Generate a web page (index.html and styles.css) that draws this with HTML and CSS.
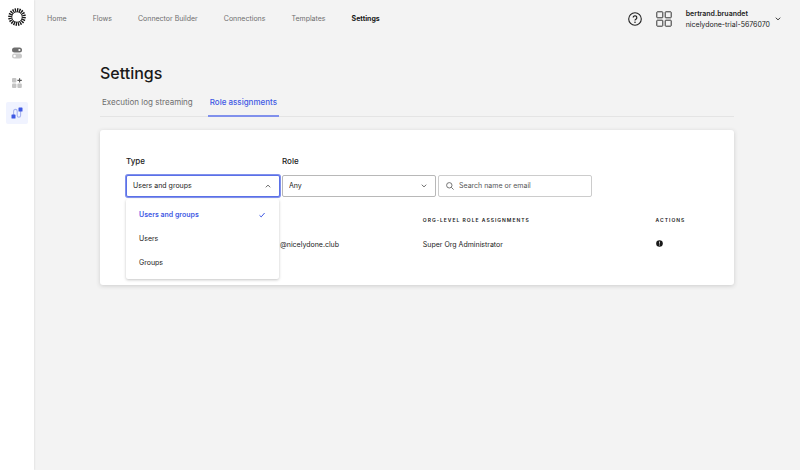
FILE: index.html
```html
<!DOCTYPE html>
<html lang="en">
<head>
    <meta charset="UTF-8">
    <meta name="viewport" content="width=device-width, initial-scale=1.0">
    <title>Settings</title>
    <link rel="stylesheet" href="styles.css">
</head>
<body>
    <aside class="sidebar">
        <a class="logo" href="#" aria-label="Dashboard">
            <svg width="18" height="18" viewBox="0 0 18 18">
                <circle cx="9" cy="9" r="5.2" fill="none" stroke="#191919" stroke-width="0.8"/>
                <circle cx="9" cy="9" r="7" fill="none" stroke="#191919" stroke-width="3.6" pathLength="60" stroke-dasharray="1.8 1.2"/>
            </svg>
        </a>
        <nav class="apps">
            <a href="#" aria-label="Switches">
                <svg width="10" height="12" viewBox="0 0 10 12">
                    <rect x="0" y="0.5" width="10" height="5" rx="2.5" fill="#6e6e6e"/>
                    <circle cx="7.4" cy="3" r="1.1" fill="#fff"/>
                    <rect x="0" y="6.5" width="10" height="5" rx="2.5" fill="#c9c9c9"/>
                    <circle cx="2.6" cy="9" r="1.3" fill="#fff"/>
                </svg>
            </a>
            <a href="#" aria-label="Add app">
                <svg width="10" height="10" viewBox="0 0 10 10">
                    <g fill="#c4c4c4">
                        <rect x="0" y="0" width="4.4" height="4.4" rx="1"/>
                        <rect x="0" y="5.6" width="4.4" height="4.4" rx="1"/>
                        <rect x="5.4" y="5.6" width="4.4" height="4.4" rx="1"/>
                    </g>
                    <path d="M7.6 0.2v4.4M5.4 2.4h4.4" stroke="#555" stroke-width="1.1"/>
                </svg>
            </a>
            <a class="active" href="#" aria-label="Workflows">
                <svg width="12" height="12" viewBox="0 0 12 12">
                    <path d="M2.6 8V4.2a1.8 1.8 0 0 1 3.6 0v4.3a1.7 1.7 0 0 0 3.4 0V4" fill="none" stroke="#a9b4ee" stroke-width="1.1"/>
                    <rect x="0.5" y="7.5" width="4" height="4" rx="0.6" fill="#3f59e4"/>
                    <rect x="7.5" y="0.5" width="4" height="4" rx="0.6" fill="#3f59e4"/>
                </svg>
            </a>
        </nav>
    </aside>
    <div class="page">
        <header class="topbar">
            <nav class="main-nav">
                <a href="#">Home</a>
                <a href="#">Flows</a>
                <a href="#">Connector Builder</a>
                <a href="#">Connections</a>
                <a href="#">Templates</a>
                <a class="current" href="#">Settings</a>
            </nav>
            <div class="tools">
                <button class="icon-button" type="button" aria-label="Help">
                    <svg width="14" height="14" viewBox="0 0 14 14" fill="none" stroke="#222">
                        <circle cx="7" cy="7" r="6.3" stroke-width="1.1"/>
                        <path d="M5.2 5.6a1.8 1.8 0 1 1 2.7 1.6c-.6.35-.9.6-.9 1.3" stroke-width="1.2"/>
                        <circle cx="7" cy="10.2" r="0.8" fill="#222" stroke="none"/>
                    </svg>
                </button>
                <button class="icon-button" type="button" aria-label="Apps">
                    <svg width="16" height="16" viewBox="0 0 16 16" fill="none" stroke="#333">
                        <rect x="0.8" y="0.8" width="6" height="6" rx="0.6"/>
                        <rect x="9.2" y="0.8" width="6" height="6" rx="0.6"/>
                        <rect x="0.8" y="9.2" width="6" height="6" rx="0.6"/>
                        <rect x="9.2" y="9.2" width="6" height="6" rx="0.6"/>
                    </svg>
                </button>
                <button class="account" type="button">
                    <span class="account-text">
                        <strong>bertrand.bruandet</strong>
                        <span>nicelydone-trial-5676070</span>
                    </span>
                    <svg width="6" height="4" viewBox="0 0 6 4" fill="none" stroke="#333"><path d="M0.8 0.7L3 2.9L5.2 0.7"/></svg>
                </button>
            </div>
        </header>
        <main class="content">
            <h1>Settings</h1>
            <nav class="tabs">
                <a href="#">Execution log streaming</a>
                <a class="selected" href="#">Role assignments</a>
            </nav>
            <section class="card">
                <form class="filters">
                    <div class="field">
                        <label for="type">Type</label>
                        <div class="control open">
                            <select id="type">
                                <option>Users and groups</option>
                                <option>Users</option>
                                <option>Groups</option>
                            </select>
                            <svg class="chevron" width="6" height="4" viewBox="0 0 6 4" fill="none" stroke="#666"><path d="M0.8 3.3L3 1.1L5.2 3.3"/></svg>
                            <div class="menu">
                                <button class="chosen" type="button">Users and groups
                                    <svg width="6" height="6" viewBox="0 0 6 6" fill="none" stroke="#3f59e4"><path d="M0.5 3.3L2.2 4.9L5.6 1"/></svg>
                                </button>
                                <button type="button">Users</button>
                                <button type="button">Groups</button>
                            </div>
                        </div>
                    </div>
                    <div class="field">
                        <label for="role">Role</label>
                        <div class="control">
                            <select id="role">
                                <option>Any</option>
                            </select>
                            <svg class="chevron" width="6" height="4" viewBox="0 0 6 4" fill="none" stroke="#666"><path d="M0.8 0.7L3 2.9L5.2 0.7"/></svg>
                        </div>
                    </div>
                    <div class="field">
                        <div class="control search">
                            <svg width="8" height="8" viewBox="0 0 8 8" fill="none" stroke="#666" stroke-width="0.9"><circle cx="3.3" cy="3.3" r="2.7"/><path d="M5.3 5.3L7.6 7.6"/></svg>
                            <input type="text" placeholder="Search name or email" aria-label="Search name or email">
                        </div>
                    </div>
                </form>
                <table class="roles">
                    <thead>
                        <tr>
                            <th class="col-user" aria-label="User"></th>
                            <th class="col-role">Org-level role assignments</th>
                            <th>Actions</th>
                        </tr>
                    </thead>
                    <tbody>
                        <tr>
                            <td class="email">@nicelydone.club</td>
                            <td>Super Org Administrator</td>
                            <td>
                                <button class="icon-button" type="button" aria-label="More actions">
                                    <svg width="7" height="7" viewBox="0 0 7 7"><circle cx="3.5" cy="3.5" r="3.3" fill="#191919"/><path d="M3.5 1.5v2.2M3.5 4.5v1" stroke="#ccc" stroke-width="1"/></svg>
                                </button>
                            </td>
                        </tr>
                    </tbody>
                </table>
            </section>
        </main>
    </div>
</body>
</html>
```

FILE: styles.css
```css
* {
    box-sizing: border-box;
}
body {
    display: flex;
    min-height: 100vh;
    margin: 0;
    background-color: #f3f3f3;
    color: #222222;
    font-family: Inter, "Liberation Sans", sans-serif;
    font-size: 7px;
    line-height: 12px;
}
a {
    color: inherit;
    text-decoration: none;
}
svg {
    display: block;
    flex: none;
}
button, input, select {
    font: inherit;
    color: inherit;
}
button {
    padding: 0;
    border: none;
    background: none;
    cursor: pointer;
}

/* Sidebar */
.sidebar {
    display: flex;
    flex-direction: column;
    align-items: center;
    flex: none;
    width: 34px;
    padding-top: 8px;
    background-color: #ffffff;
    box-shadow: 0 0 2px #d0d0d0;
}
.apps {
    display: flex;
    flex-direction: column;
    gap: 8px;
    margin-top: 16px;
}
.apps a {
    display: flex;
    align-items: center;
    justify-content: center;
    width: 22px;
    height: 22px;
    border-radius: 2px;
}
.apps .active {
    background-color: #f0f3ff;
}

/* Top bar */
.page {
    flex: 1;
    min-width: 0;
}
.topbar {
    display: flex;
    align-items: center;
    justify-content: space-between;
    height: 37px;
    padding: 0 19px 0 13px;
}
.main-nav {
    display: flex;
    gap: 26px;
    color: #6e6e6e;
}
.main-nav .current {
    color: #191919;
    font-weight: 700;
}
.tools {
    display: flex;
    align-items: center;
    gap: 14px;
}
.account {
    display: flex;
    align-items: center;
    gap: 5px;
    text-align: left;
    line-height: 11px;
}
.account-text {
    display: flex;
    flex-direction: column;
}
.account strong {
    font-weight: 600;
}

/* Content */
.content {
    padding: 24px 66px;
}
h1 {
    margin: 0;
    font-size: 16px;
    line-height: 24px;
    font-weight: 500;
    color: #191919;
}
.tabs {
    display: flex;
    gap: 13px;
    margin-bottom: 13px;
    border-bottom: 1px solid #e4e4e4;
    color: #6e6e6e;
    font-size: 8px;
}
.tabs a {
    margin-bottom: -1px;
    padding: 11px 2px 7px;
    border-bottom: 2px solid transparent;
}
.tabs .selected {
    border-color: #8090ec;
    color: #3f59e4;
    font-weight: 500;
}
.card {
    padding: 25px 26px 24px;
    border-radius: 3px;
    background-color: #ffffff;
    box-shadow: 0 1px 4px #cccccc;
}

/* Filters */
.filters {
    display: flex;
    align-items: flex-end;
    gap: 2px;
}
.field {
    flex: 0 1 154px;
}
.field label {
    display: block;
    margin-bottom: 8px;
    font-size: 8px;
    font-weight: 500;
}
.control {
    position: relative;
    display: flex;
    align-items: center;
    height: 22px;
    border: 1px solid #b8b8b8;
    border-radius: 2px;
    background-color: #ffffff;
}
.control select, .control input {
    flex: 1;
    align-self: stretch;
    min-width: 0;
    padding: 0 6px;
    border: none;
    outline: none;
    background: none;
    appearance: none;
}
.control input::placeholder {
    color: #555555;
    opacity: 1;
}
.control .chevron {
    margin-right: 8px;
}
.open {
    border-color: #5a70e8;
    box-shadow: 0 0 0 1px #8090ec;
}
.search {
    padding-left: 7px;
    border-color: #cccccc;
}
.search input {
    padding: 0 5px;
}
.menu {
    position: absolute;
    top: 23px;
    left: -1px;
    right: 0;
    z-index: 1;
    padding: 4px 0;
    border-radius: 2px;
    background-color: #ffffff;
    box-shadow: 0 1px 3px #c4c4c4;
}
.menu button {
    display: flex;
    align-items: center;
    justify-content: space-between;
    width: 100%;
    height: 24px;
    padding: 0 14px 0 13px;
}
.menu .chosen {
    color: #3f59e4;
    font-weight: 600;
}

/* Table */
.roles {
    width: 100%;
    margin-top: 14px;
    border-collapse: collapse;
    table-layout: fixed;
}
.roles th {
    height: 18px;
    padding: 0;
    font-size: 5px;
    font-weight: 600;
    letter-spacing: 1px;
    text-align: left;
    text-transform: uppercase;
}
.roles td {
    height: 32px;
    padding: 0;
}
.roles .col-user {
    width: 51%;
}
.roles .col-role {
    width: 40%;
}
.roles .email {
    padding-left: 154px;
}
```
